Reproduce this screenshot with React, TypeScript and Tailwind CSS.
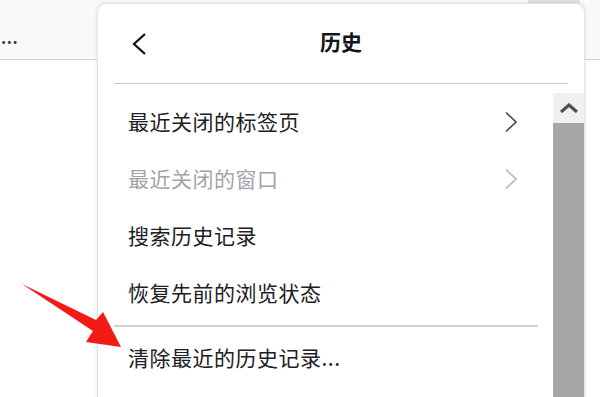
const font = { fontFamily: '"Noto Sans CJK SC", "Noto Sans", sans-serif' };

function Chevron({ color }: { color: string }) {
  return (
    <svg width="14" height="22" viewBox="0 0 14 22">
      <path d="M2 1.5 L12 11 L2 20.5" fill="none" stroke={color} strokeWidth="1.7" />
    </svg>
  );
}

function MenuItem({ label, disabled, arrow }: { label: string; disabled?: boolean; arrow?: boolean }) {
  return (
    <div className="flex h-[57px] items-center justify-between pl-[30px] pr-[35px]">
      <span className={`text-[21px] leading-none tracking-[0.5px] ${disabled ? 'text-[#a3a3a8]' : 'text-[#202024]'}`}>
        {label}
      </span>
      {arrow && <Chevron color={disabled ? '#b8b8bc' : '#4a4a50'} />}
    </div>
  );
}

export default function App() {
  return (
    <div className="relative h-[397px] w-[600px] overflow-hidden bg-white" style={font}>
      {/* Browser toolbar behind the panel */}
      <div className="flex h-[60px] items-end border-b border-[#d2d2d8] bg-[#f9f9fb] pb-[14px]">
        <span className="pl-[1px] text-[16px] font-bold leading-none tracking-[0.5px] text-[#3b3b40]">...</span>
      </div>
      <div className="absolute right-[20px] top-0 h-[3px] w-[52px] bg-[#e2e2e6]" />

      {/* History panel */}
      <div className="absolute left-[97px] top-[3px] h-[420px] w-[488px] rounded-[9px] border border-[#e4e4e8] bg-white shadow-[0_0_4px_rgba(0,0,0,0.12)]">
        <div className="relative flex h-[79px] items-center justify-center pb-[3px]">
          <svg className="absolute left-[33px] top-[29px]" width="16" height="22" viewBox="0 0 16 22">
            <path d="M14 1 L3 11 L14 21" fill="none" stroke="#15141a" strokeWidth="2.3" />
          </svg>
          <span className="text-[21px] font-bold text-[#15141a]">历史</span>
        </div>
        <div className="mx-[16px] h-px bg-[#c8c8cc]" />

        <div className="flex pt-[9px]">
          <div className="flex-1">
            <MenuItem label="最近关闭的标签页" arrow />
            <MenuItem label="最近关闭的窗口" arrow disabled />
            <MenuItem label="搜索历史记录" />
            <MenuItem label="恢复先前的浏览状态" />
            <div className="ml-[16px] mr-[15px] mt-[4px] h-[2px] bg-[#d0d0d4]" />
            <div className="mt-[2px]">
              <MenuItem label="清除最近的历史记录..." />
            </div>
          </div>
          {/* Scrollbar */}
          <div className="flex w-[31px] flex-col">
            <div className="flex h-[30px] items-center justify-center bg-[#f0f0f0]">
              <svg width="18" height="10" viewBox="0 0 18 10">
                <path d="M1 9 L9 2 L17 9" fill="none" stroke="#4f4f4f" strokeWidth="3.2" />
              </svg>
            </div>
            <div className="h-[300px] bg-[#a6a6a6]" />
          </div>
        </div>
      </div>

      {/* Red annotation arrow */}
      <svg className="absolute left-0 top-0" width="600" height="397" viewBox="0 0 600 397">
        <polygon points="22,284 96,320 103,312 121,347 86,342 93,331" fill="#f41a16" />
      </svg>
    </div>
  );
}
